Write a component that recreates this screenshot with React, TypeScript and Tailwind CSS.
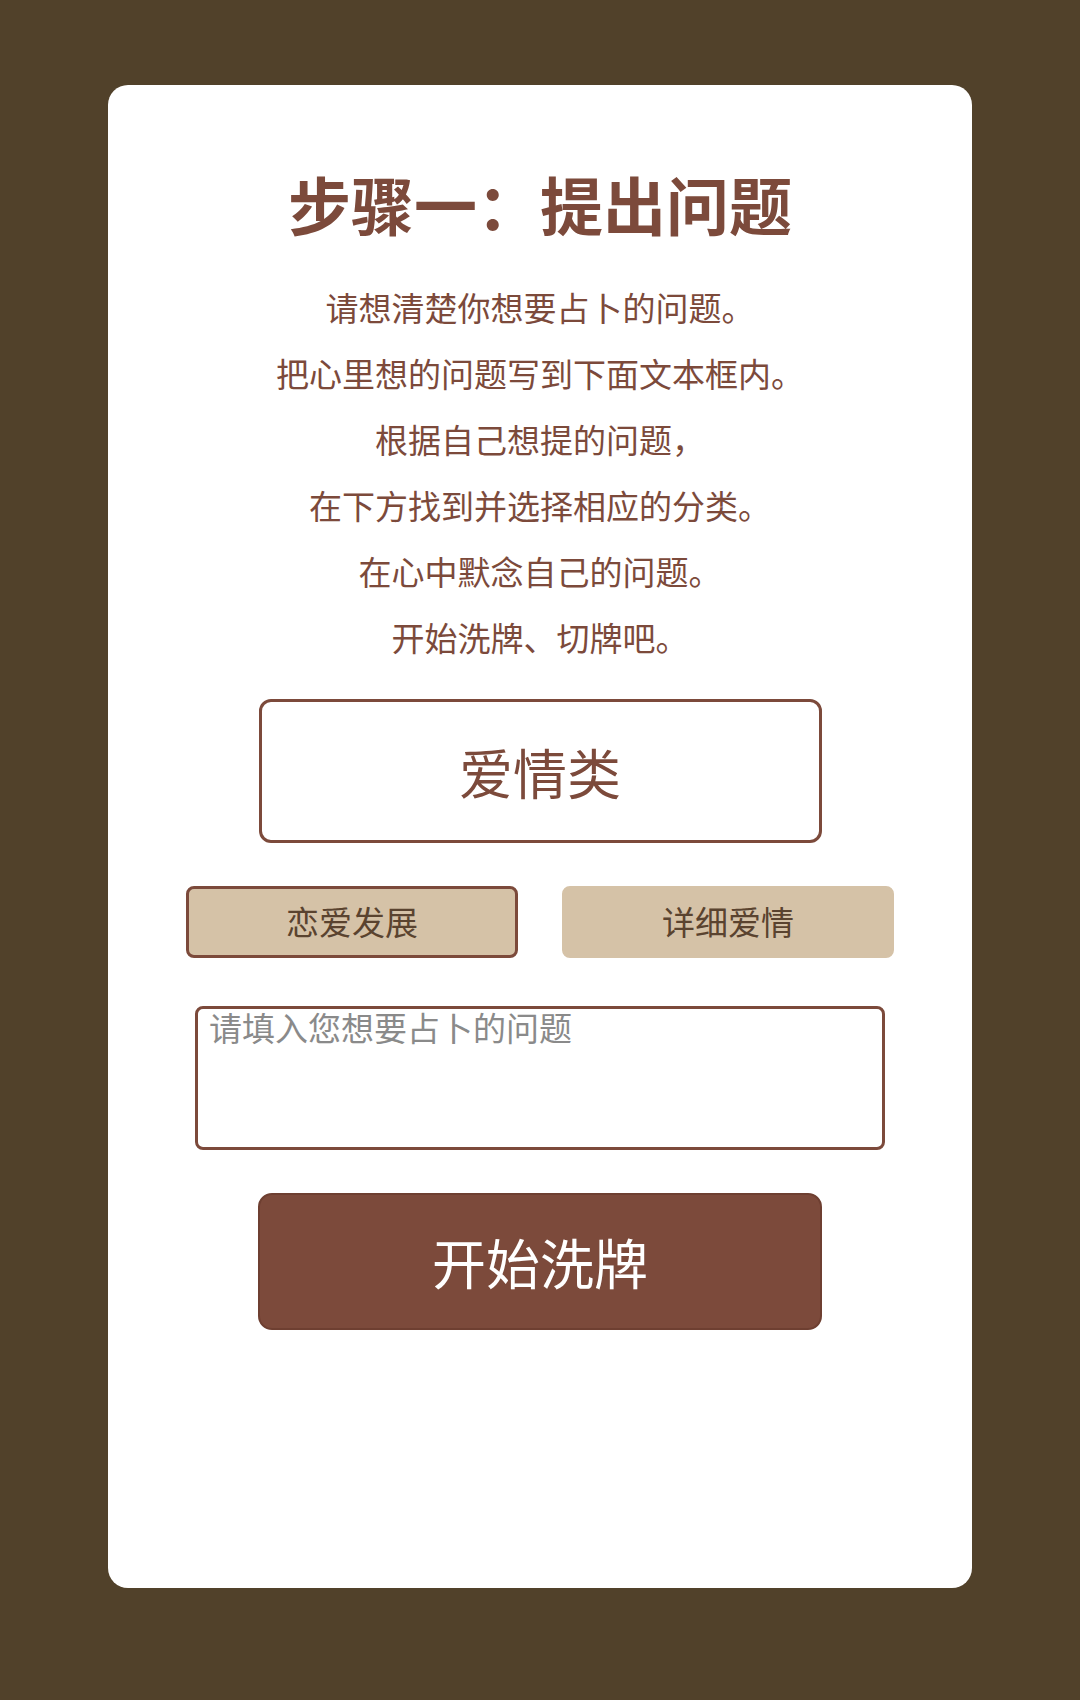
import React, { useState } from 'react';

const lines = [
  '请想清楚你想要占卜的问题。',
  '把心里想的问题写到下面文本框内。',
  '根据自己想提的问题，',
  '在下方找到并选择相应的分类。',
  '在心中默念自己的问题。',
  '开始洗牌、切牌吧。',
];

const options = ['恋爱发展', '详细爱情'];

export default function App() {
  const [selected, setSelected] = useState('恋爱发展');
  const [question, setQuestion] = useState('');

  return (
    <div
      className="min-h-[1700px] bg-[#51412a] pt-[85px] px-[108px]"
      style={{ fontFamily: '"Noto Sans CJK SC", "Noto Sans", sans-serif' }}
    >
      <div className="bg-white rounded-[20px] h-[1503px] flex flex-col items-center pt-[79px]">
        <h1 className="text-[63px] leading-[77px] font-bold text-[#7c4a3b]">步骤一：提出问题</h1>

        <div className="mt-[33px] text-center text-[33px] leading-[66px] text-[#7c4a3b]">
          {lines.map((line) => (
            <p key={line}>{line}</p>
          ))}
        </div>

        {/* Category */}
        <div className="mt-[29px] w-[563px] h-[144px] border-[3px] border-[#7c4a3b] rounded-[12px] flex items-center justify-center text-[54px] text-[#7c4a3b]">
          爱情类
        </div>

        <div className="mt-[43px] w-[708px] flex justify-between">
          {options.map((opt) => (
            <button
              key={opt}
              onClick={() => setSelected(opt)}
              className={`w-[332px] h-[72px] rounded-[8px] bg-[#d5c2a7] text-[33px] text-[#5a432f] flex items-center justify-center ${
                selected === opt ? 'border-[3px] border-[#7c4a3b]' : 'border-[3px] border-[#d5c2a7]'
              }`}
            >
              {opt}
            </button>
          ))}
        </div>

        <textarea
          value={question}
          onChange={(e) => setQuestion(e.target.value)}
          placeholder="请填入您想要占卜的问题"
          className="mt-[48px] w-[690px] h-[144px] border-[3px] border-[#7c4a3b] rounded-[8px] pl-[11px] pt-0 text-[33px] leading-[36px] text-[#333] placeholder:text-[#8a8a8a] resize-none outline-none"
        />

        <button className="mt-[43px] w-[564px] h-[137px] rounded-[14px] bg-[#7c4a3b] border-2 border-[#6e3f31] text-white text-[54px] flex items-center justify-center">
          开始洗牌
        </button>
      </div>
    </div>
  );
}
